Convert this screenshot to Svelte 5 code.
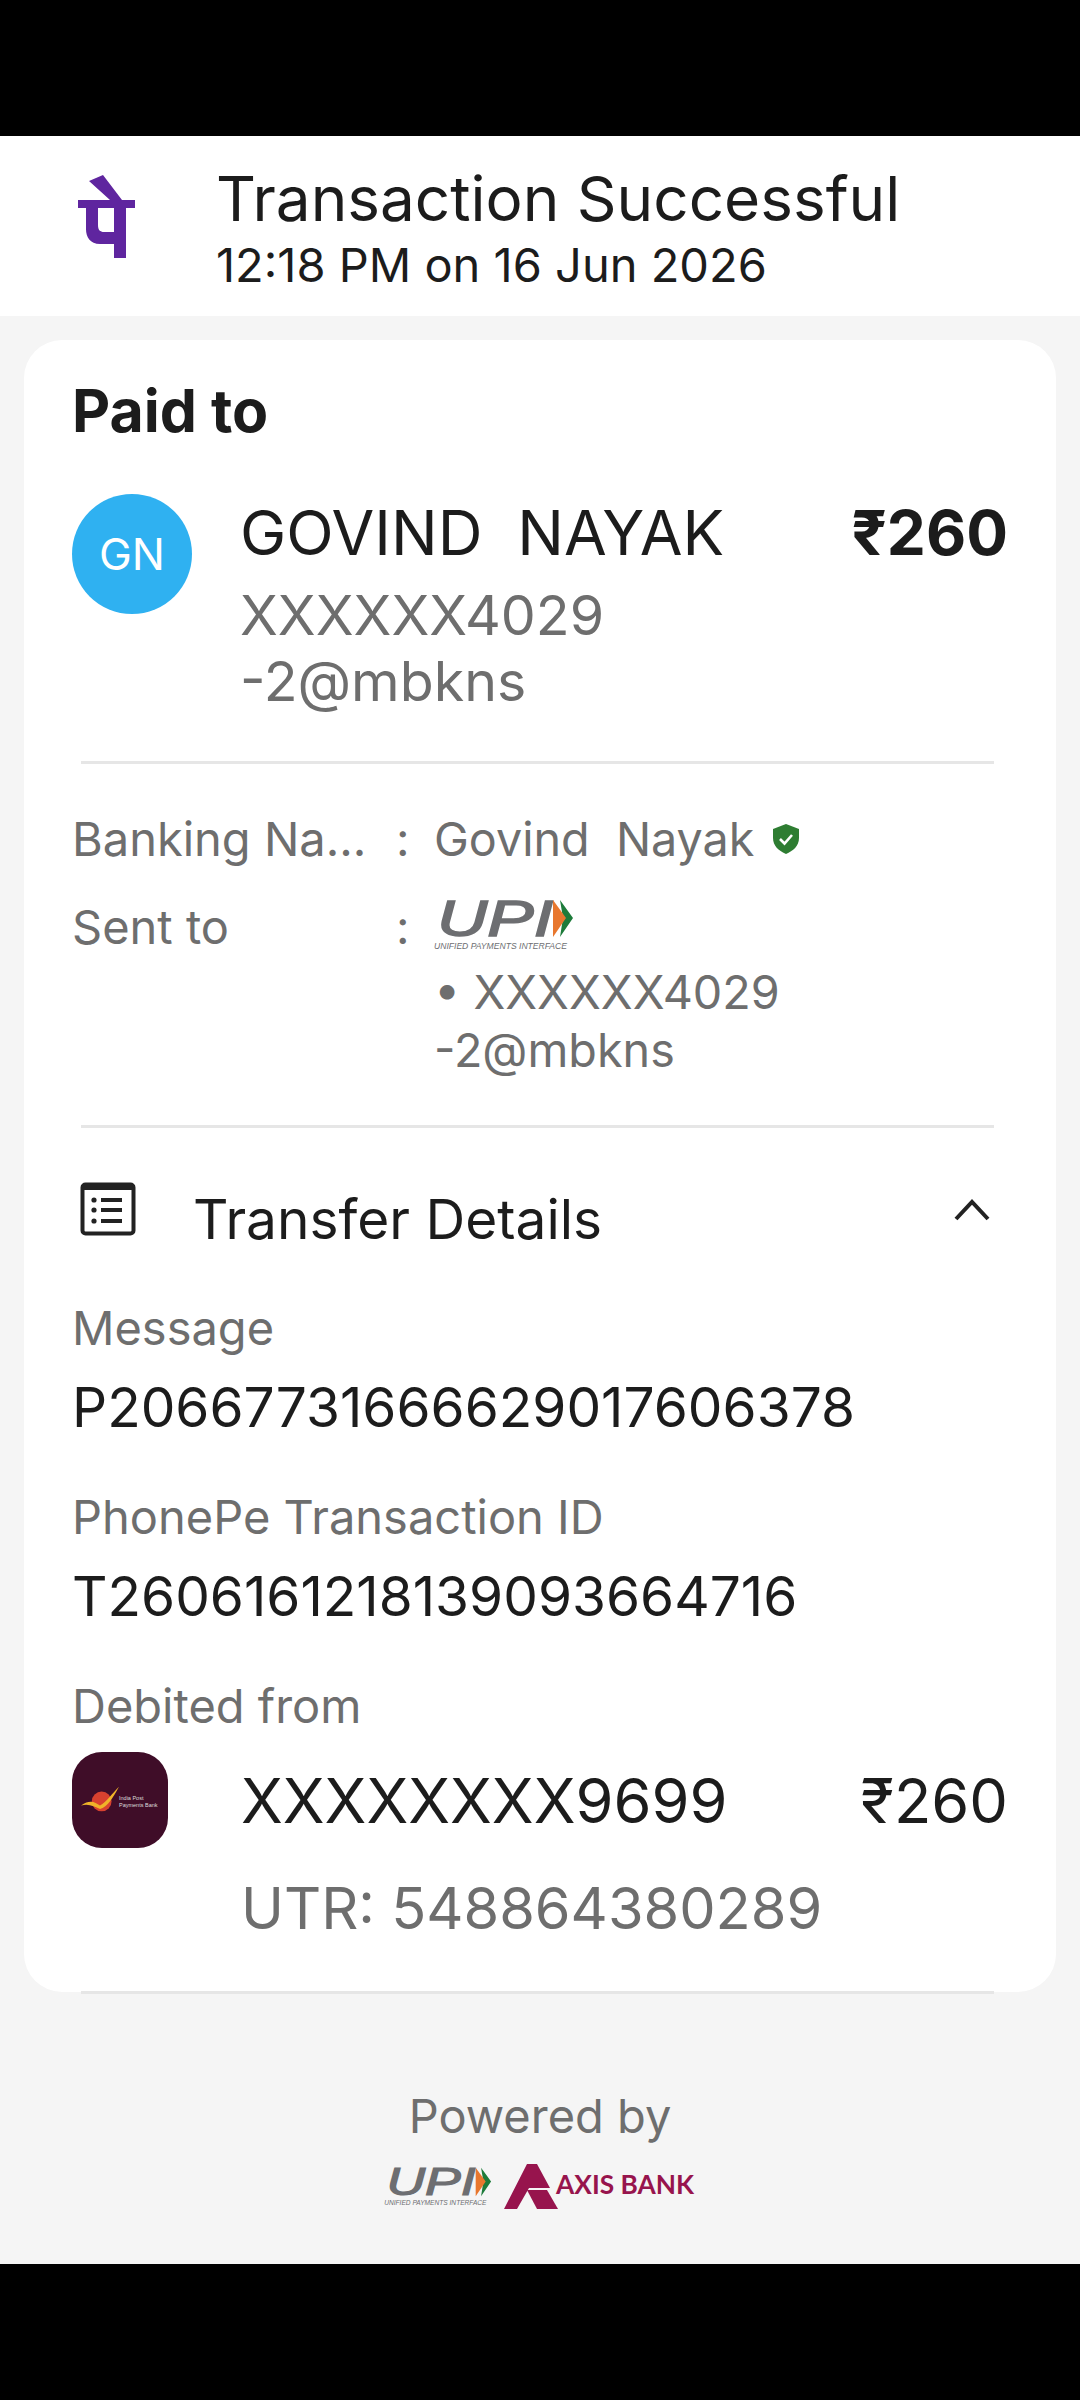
<script lang="ts">
    const mask = "XXXXXX4029";
    const handle = "-2@mbkns";

    const details = [
        { label: "Message", value: "P20667731666629017606378" },
        { label: "PhonePe Transaction ID", value: "T2606161218139093664716" },
    ];
</script>

{#snippet upiLogo(width: number, height: number, fill: string)}
    <svg class="upi" {width} {height} viewBox="0 0 140 52">
        <text
            x="3"
            y="37"
            class="upi__word"
            {fill}
            stroke={fill}
            textLength="116"
            lengthAdjust="spacingAndGlyphs">UPI</text
        >
        <polygon points="126,1 139,19 126,38 129,19" fill="#1d7b3a" />
        <polygon points="119,1 132,19 119,38" fill="#e8772e" />
        <text
            x="0"
            y="50"
            class="upi__tag"
            {fill}
            textLength="133"
            lengthAdjust="spacingAndGlyphs">UNIFIED PAYMENTS INTERFACE</text
        >
    </svg>
{/snippet}

<div class="page">
    <div class="screen">
        <header class="top">
            <svg class="top__logo" width="60" height="86" viewBox="0 0 60 86">
                <path
                    d="M13 6 L27 0 L46 25 L59 25 L59 33 L50 33 L50 83 L38 83 L38 69 L24 69 C14 69 10 62 10 54 L10 33 L2 33 L2 25 L34 25 Z M22 33 L22 50 C22 55 24 57 28 57 L38 57 L38 33 Z"
                    fill="#5f259f"
                    fill-rule="evenodd"
                />
            </svg>
            <div class="top__text">
                <div class="top__title">Transaction Successful</div>
                <div class="top__time">12:18 PM on 16 Jun 2026</div>
            </div>
        </header>

        <main class="card">
            <h2 class="card__title">Paid to</h2>

            <section class="payee">
                <div class="avatar">GN</div>
                <div class="payee__body">
                    <div class="payee__line">
                        <span class="payee__name">GOVIND&nbsp; NAYAK</span>
                        <span class="payee__amount">₹260</span>
                    </div>
                    <div class="payee__sub payee__sub--first">{mask}</div>
                    <div class="payee__sub">{handle}</div>
                </div>
            </section>

            <hr class="rule rule--first" />

            <section class="facts">
                <div class="fact">
                    <span class="fact__key">Banking Na...</span>
                    <span class="fact__colon">:</span>
                    <span class="fact__value fact__value--row">
                        Govind&nbsp; Nayak
                        <svg width="30" height="32" viewBox="0 0 30 32">
                            <path
                                d="M15 1 L28 6 L28 15 C28 23 22 28 15 31 C8 28 2 23 2 15 L2 6 Z"
                                fill="#2e7d32"
                            />
                            <path
                                d="M9 16 L13.5 20.5 L21 12"
                                fill="none"
                                stroke="#fff"
                                stroke-width="2.6"
                            />
                        </svg>
                    </span>
                </div>
                <div class="fact fact--sent">
                    <span class="fact__key">Sent to</span>
                    <span class="fact__colon">:</span>
                    <div class="fact__value">
                        {@render upiLogo(140, 52, "#6d6e71")}
                        <div class="fact__vpa fact__vpa--first">• {mask}</div>
                        <div class="fact__vpa">{handle}</div>
                    </div>
                </div>
            </section>

            <hr class="rule rule--second" />

            <section class="transfer">
                <svg class="transfer__icon" width="56" height="54" viewBox="0 0 56 54">
                    <rect x="2.5" y="2.5" width="51" height="49" rx="3" fill="none" stroke="#222" stroke-width="4" />
                    <rect x="2" y="2" width="52" height="6" fill="#222" />
                    <g fill="#222">
                        <circle cx="14" cy="18" r="2.6" />
                        <circle cx="14" cy="28" r="2.6" />
                        <circle cx="14" cy="39" r="2.6" />
                        <rect x="21" y="16" width="21" height="4" />
                        <rect x="21" y="26" width="21" height="4" />
                        <rect x="21" y="37" width="21" height="4" />
                    </g>
                </svg>
                <span class="transfer__title">Transfer Details</span>
                <svg class="transfer__chevron" width="38" height="24" viewBox="0 0 38 24">
                    <path d="M3 21 L19 4 L35 21" fill="none" stroke="#222" stroke-width="4" />
                </svg>
            </section>

            {#each details as row (row.label)}
                <div class="detail">
                    <div class="detail__label">{row.label}</div>
                    <div class="detail__value">{row.value}</div>
                </div>
            {/each}

            <div class="detail__label detail__label--debit">Debited from</div>
            <section class="debit">
                <div class="bank">
                    <svg width="48" height="34" viewBox="0 0 48 34">
                        <circle cx="26" cy="20" r="12" fill="#d8412f" />
                        <path
                            d="M1 25 C12 17 18 21 24 25 C32 20 39 10 47 2 C40 15 33 27 24 29 C17 26 10 22 1 25 Z"
                            fill="#f0b429"
                        />
                    </svg>
                    <span class="bank__name">India Post<br />Payments Bank</span>
                </div>
                <div class="debit__body">
                    <div class="debit__line">
                        <span class="debit__acct">XXXXXXXX9699</span>
                        <span class="debit__amount">₹260</span>
                    </div>
                    <div class="debit__utr">UTR: 548864380289</div>
                </div>
            </section>

            <hr class="rule rule--last" />
        </main>

        <footer class="powered">
            <div class="powered__label">Powered by</div>
            <div class="powered__logos">
                {@render upiLogo(108, 40, "#6d6e71")}
                <svg class="axis" width="192" height="46" viewBox="0 0 192 46">
                    <polygon points="0,45 23,0 33,0 46,24 25,24 13,45" fill="#97144d" />
                    <polygon points="23,26 43,26 54,45 33,45" fill="#97144d" />
                    <text x="52" y="30" class="axis__word" textLength="138" lengthAdjust="spacingAndGlyphs">AXIS BANK</text>
                </svg>
            </div>
        </footer>
    </div>
</div>

<style>
    :global(body) {
        margin: 0;
        background: #000;
    }

    .page {
        height: 2400px;
        padding: 136px 0;
        box-sizing: border-box;
        background: #000;
        font-family: Inter, "Noto Sans", sans-serif;
        color: #1c1c1c;
    }

    .screen {
        height: 2128px;
        display: flex;
        flex-direction: column;
        background: #f5f5f5;
    }

    .top {
        height: 180px;
        display: flex;
        align-items: center;
        background: #fff;
        padding-left: 76px;
        box-sizing: border-box;
    }

    .top__logo {
        margin-right: 80px;
        margin-top: -16px;
    }

    .top__text {
        padding-top: 6px;
    }

    .top__title {
        font-size: 62px;
        line-height: 70px;
    }

    .top__time {
        font-size: 47px;
        line-height: 58px;
        margin-top: 2px;
    }

    .card {
        height: 1652px;
        margin: 24px 24px 0;
        padding: 0 48px;
        box-sizing: border-box;
        background: #fff;
        border-radius: 38px;
        position: relative;
    }

    .card__title {
        margin: 0;
        padding-top: 40px;
        font-size: 59px;
        line-height: 62px;
        font-weight: 700;
    }

    .payee {
        display: flex;
        margin-top: 52px;
    }

    .avatar {
        width: 120px;
        height: 120px;
        flex: none;
        border-radius: 50%;
        background: #2fb1f1;
        color: #fff;
        display: flex;
        align-items: center;
        justify-content: center;
        font-size: 44px;
    }

    .payee__body {
        flex: 1;
        margin-left: 48px;
        margin-top: 4px;
    }

    .payee__line,
    .debit__line {
        display: flex;
        justify-content: space-between;
        align-items: baseline;
    }

    .payee__name {
        font-size: 62px;
        line-height: 70px;
    }

    .payee__amount {
        font-size: 62px;
        line-height: 70px;
        font-weight: 700;
    }

    .payee__sub {
        font-size: 55.5px;
        line-height: 66px;
        color: #6e6e6e;
    }

    .payee__sub--first {
        margin-top: 14px;
    }

    .rule {
        border: 0;
        height: 3px;
        background: #e6e6e6;
        margin: 0 14px 0 9px;
    }

    .rule--first {
        margin-top: 47px;
    }

    .facts {
        padding-top: 47px;
        font-size: 47px;
        color: #6e6e6e;
    }

    .fact {
        display: flex;
        line-height: 56px;
    }

    .fact--sent {
        margin-top: 32px;
    }

    .fact__key {
        width: 324px;
    }

    .fact__colon {
        width: 38px;
    }

    .fact__value {
        font-size: 46.7px;
    }

    .fact__value--row {
        display: flex;
        align-items: center;
        gap: 17px;
    }

    .fact__vpa {
        line-height: 58px;
    }

    .fact__vpa--first {
        margin-top: 12px;
    }

    .upi {
        display: block;
        overflow: visible;
    }

    .upi__word {
        font-family: "Liberation Sans", sans-serif;
        font-style: italic;
        font-weight: 400;
        font-size: 50px;
        stroke-width: 1.5px;
    }

    .upi__tag {
        font-family: "Liberation Sans", sans-serif;
        font-style: italic;
        font-size: 9px;
    }

    .rule--second {
        margin-top: 46px;
    }

    .transfer {
        display: flex;
        align-items: flex-start;
        padding-top: 54px;
        height: 172px;
        box-sizing: border-box;
    }

    .transfer__icon {
        margin-left: 8px;
    }

    .transfer__title {
        margin-left: 57px;
        font-size: 55px;
        line-height: 66px;
        margin-top: 4px;
    }

    .transfer__chevron {
        margin-left: auto;
        margin-top: 16px;
        margin-right: 17px;
    }

    .detail {
        margin-bottom: 50px;
    }

    .detail__label {
        font-size: 47px;
        line-height: 56px;
        color: #6e6e6e;
    }

    .detail__value {
        margin-top: 19px;
        font-size: 55px;
        line-height: 64px;
    }

    .debit {
        display: flex;
        margin-top: 18px;
    }

    .bank {
        width: 96px;
        height: 96px;
        flex: none;
        border-radius: 30px;
        background: #3f0d28;
        position: relative;
    }

    .bank svg {
        position: absolute;
        left: 8px;
        top: 33px;
        width: 40px;
        height: 28px;
    }

    .bank__name {
        position: absolute;
        left: 47px;
        top: 43px;
        font-size: 5.5px;
        line-height: 7px;
        color: #ddd;
        white-space: nowrap;
        font-family: "Liberation Sans", sans-serif;
    }

    .debit__body {
        flex: 1;
        margin-left: 73px;
        padding-top: 14px;
    }

    .debit__acct,
    .debit__amount {
        font-size: 61.3px;
        line-height: 70px;
    }

    .debit__utr {
        margin-top: 39px;
        font-size: 57.7px;
        line-height: 66px;
        color: #6e6e6e;
    }

    .rule--last {
        position: absolute;
        left: 57px;
        right: 62px;
        bottom: -2px;
        margin: 0;
    }

    .powered {
        display: flex;
        flex-direction: column;
        align-items: center;
        padding-top: 96px;
    }

    .powered__label {
        font-size: 47px;
        line-height: 56px;
        color: #6e6e6e;
    }

    .powered__logos {
        display: flex;
        align-items: center;
        gap: 12px;
        margin-top: 20px;
    }

    .axis__word {
        font-family: Lato, "Liberation Sans", sans-serif;
        font-weight: 700;
        font-size: 26px;
        fill: #97144d;
    }
</style>
